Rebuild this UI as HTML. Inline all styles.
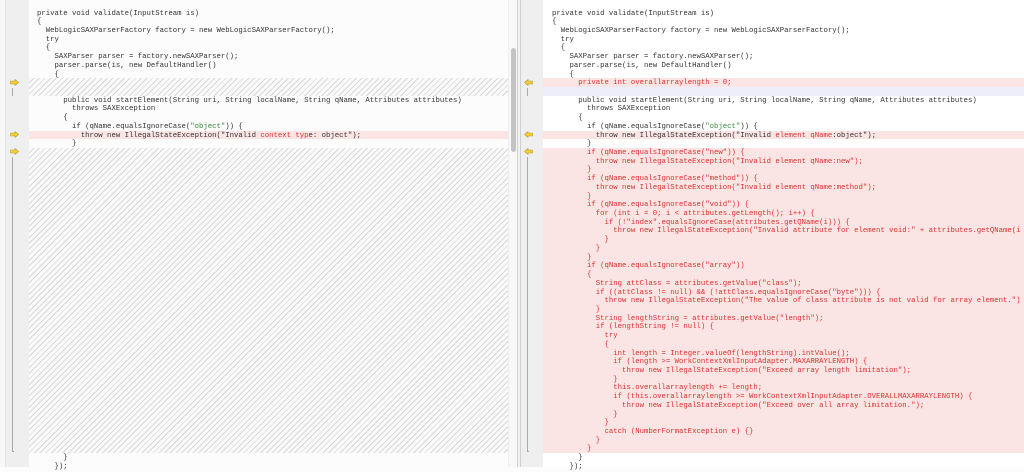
<!DOCTYPE html>
<html><head><meta charset="utf-8"><style>
*{margin:0;padding:0;box-sizing:border-box}
body{width:1024px;height:467px;overflow:hidden;background:#fcfcfc;position:relative;font-family:"Liberation Mono",monospace;}
.a{position:absolute}
pre{position:absolute;font-family:"Liberation Mono",monospace;font-size:7.3px;line-height:8.72px;color:#333;white-space:pre}
.r{color:#d8322e}
.g{color:#3a8a3a}
.hatch{background:repeating-linear-gradient(135deg,#fafafa 0 3px,#d8d8d8 3px 4px)}
.arr{position:absolute;width:9px;height:7px}
</style></head><body>
<div class="a" style="left:0;top:0;width:6px;height:467px;background:#f7f7f7;border-right:1px solid #e4e4e4"></div>
<div class="a" style="left:6px;top:0;width:23px;height:467px;background:#efefef"></div>
<div class="a" style="left:29px;top:0;width:479px;height:467px;background:#fcfcfc"></div>
<div class="a hatch" style="left:29px;top:78.3px;width:479px;height:17.4px"></div>
<div class="a" style="left:29px;top:130.6px;width:479px;height:8.7px;background:#fbe4e4"></div>
<div class="a hatch" style="left:29px;top:148px;width:479px;height:305px"></div>
<div class="a" style="left:508px;top:0;width:9px;height:467px;background:#f8f8f8;border-left:1px solid #eee"></div>
<div class="a" style="left:511px;top:48px;width:5px;height:104px;background:#c4c4c4;border-radius:3px"></div>
<div class="a" style="left:517px;top:0;width:4px;height:467px;background:#f3f3f3;border-left:1px solid #d0d0d0;border-right:1px solid #d0d0d0"></div>
<div class="a" style="left:521px;top:0;width:22px;height:467px;background:#efefef"></div>
<div class="a" style="left:543px;top:0;width:481px;height:467px;background:#fff"></div>
<div class="a" style="left:543px;top:78.3px;width:481px;height:8.7px;background:#fbe4e4"></div>
<div class="a" style="left:543px;top:87px;width:481px;height:8.7px;background:#eeeefb"></div>
<div class="a" style="left:543px;top:130.6px;width:481px;height:8.7px;background:#fbe4e4"></div>
<div class="a" style="left:543px;top:148px;width:481px;height:305px;background:#fbe4e4"></div>

<svg class="arr" style="left:10px;top:79px" viewBox="0 0 9 7"><path d="M0.5 2h4.5V0.5L8.5 3.5 5 6.5V5H0.5z" fill="#f2cf3a" stroke="#b89a20" stroke-width="0.6"/></svg>
<svg class="arr" style="left:10px;top:131px" viewBox="0 0 9 7"><path d="M0.5 2h4.5V0.5L8.5 3.5 5 6.5V5H0.5z" fill="#f2cf3a" stroke="#b89a20" stroke-width="0.6"/></svg>
<svg class="arr" style="left:10px;top:148px" viewBox="0 0 9 7"><path d="M0.5 2h4.5V0.5L8.5 3.5 5 6.5V5H0.5z" fill="#f2cf3a" stroke="#b89a20" stroke-width="0.6"/></svg>
<div class="a" style="left:12px;top:88px;width:1px;height:8px;background:#aaa"></div>
<div class="a" style="left:12px;top:157px;width:1px;height:295px;background:#aaa"></div>
<div class="a" style="left:12px;top:451px;width:2px;height:1px;background:#aaa"></div>
<svg class="arr" style="left:524px;top:79px" viewBox="0 0 9 7"><path d="M8.5 2H4V0.5L0.5 3.5 4 6.5V5h4.5z" fill="#f2cf3a" stroke="#b89a20" stroke-width="0.6"/></svg>
<svg class="arr" style="left:524px;top:131px" viewBox="0 0 9 7"><path d="M8.5 2H4V0.5L0.5 3.5 4 6.5V5h4.5z" fill="#f2cf3a" stroke="#b89a20" stroke-width="0.6"/></svg>
<svg class="arr" style="left:524px;top:148px" viewBox="0 0 9 7"><path d="M8.5 2H4V0.5L0.5 3.5 4 6.5V5h4.5z" fill="#f2cf3a" stroke="#b89a20" stroke-width="0.6"/></svg>
<div class="a" style="left:527px;top:88px;width:1px;height:8px;background:#aaa"></div>
<div class="a" style="left:527px;top:157px;width:1px;height:295px;background:#aaa"></div>
<div class="a" style="left:527px;top:451px;width:2px;height:1px;background:#aaa"></div>

<pre style="left:37px;top:9.5px">private void validate(InputStream is)
{
  WebLogicSAXParserFactory factory = new WebLogicSAXParserFactory();
  try
  {
    SAXParser parser = factory.newSAXParser();
    parser.parse(is, new DefaultHandler()
    {


      public void startElement(String uri, String localName, String qName, Attributes attributes)
        throws SAXException
      {
        if (qName.equalsIgnoreCase(<span class="g">"object"</span>)) {
          throw new IllegalStateException("Invalid <span class="r">context</span> <span class="r">typ</span>e: object");
        }</pre>
<pre style="left:37px;top:454.2px">      }
    });</pre>

<pre style="left:552px;top:9.5px">private void validate(InputStream is)
{
  WebLogicSAXParserFactory factory = new WebLogicSAXParserFactory();
  try
  {
    SAXParser parser = factory.newSAXParser();
    parser.parse(is, new DefaultHandler()
    {
<span class="r">      private int overallarraylength = 0;</span>

      public void startElement(String uri, String localName, String qName, Attributes attributes)
        throws SAXException
      {
        if (qName.equalsIgnoreCase(<span class="g">"object"</span>)) {
          throw new IllegalStateException("Invalid <span class="r">element</span> <span class="r">qName</span>:object");
        }
<span class="r">        if (qName.equalsIgnoreCase("new")) {
          throw new IllegalStateException("Invalid element qName:new");
        }
        if (qName.equalsIgnoreCase("method")) {
          throw new IllegalStateException("Invalid element qName:method");
        }
        if (qName.equalsIgnoreCase("void")) {
          for (int i = 0; i &lt; attributes.getLength(); i++) {
            if (!"index".equalsIgnoreCase(attributes.getQName(i))) {
              throw new IllegalStateException("Invalid attribute for element void:" + attributes.getQName(i
            }
          }
        }
        if (qName.equalsIgnoreCase("array"))
        {
          String attClass = attributes.getValue("class");
          if ((attClass != null) &amp;&amp; (!attClass.equalsIgnoreCase("byte"))) {
            throw new IllegalStateException("The value of class attribute is not valid for array element.")
          }
          String lengthString = attributes.getValue("length");
          if (lengthString != null) {
            try
            {
              int length = Integer.valueOf(lengthString).intValue();
              if (length &gt;= WorkContextXmlInputAdapter.MAXARRAYLENGTH) {
                throw new IllegalStateException("Exceed array length limitation");
              }
              this.overallarraylength += length;
              if (this.overallarraylength &gt;= WorkContextXmlInputAdapter.OVERALLMAXARRAYLENGTH) {
                throw new IllegalStateException("Exceed over all array limitation.");
              }
            }
            catch (NumberFormatException e) {}
          }
        }</span>
      }
    });</pre>
</body></html>
